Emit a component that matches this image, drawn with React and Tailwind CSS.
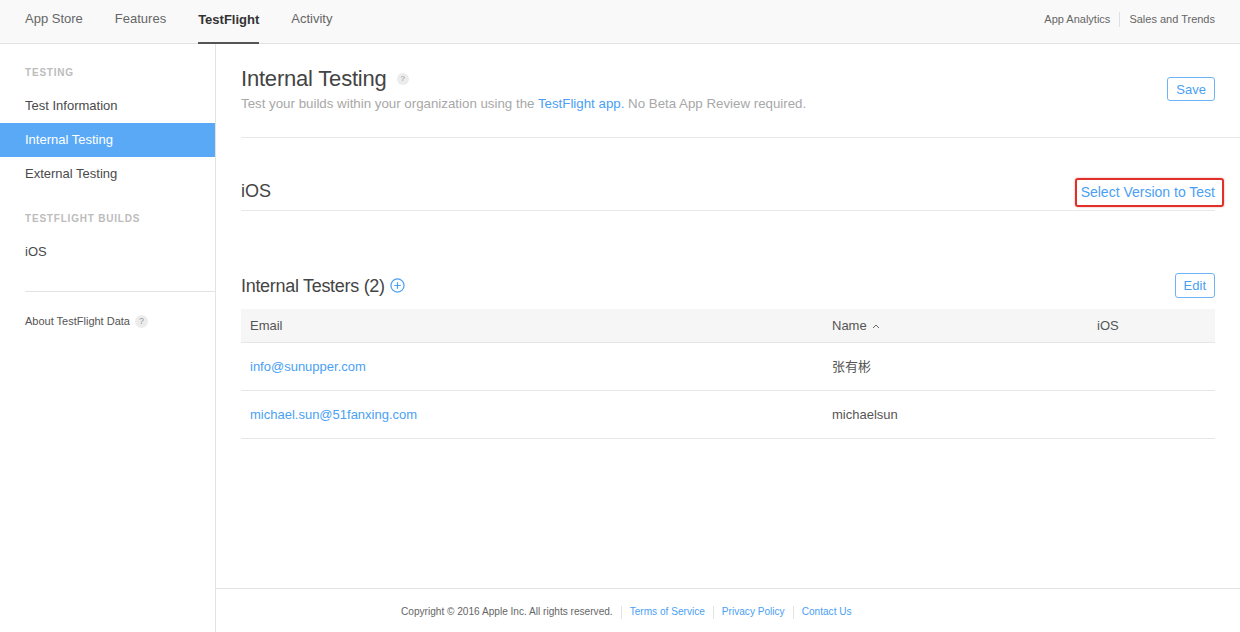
import React from 'react';

const font = { fontFamily: '"Helvetica Neue", "Liberation Sans", "Noto Sans CJK SC", Arial, sans-serif' };

function Help({ size = 'w-3 h-3 text-[8px]' }) {
  return (
    <span className={`inline-flex items-center justify-center rounded-full bg-[#ececec] text-[#999] leading-none ${size}`}>?</span>
  );
}

function SideLabel({ children, className = '' }) {
  return (
    <div className={`px-[25px] h-3 text-[10px] leading-3 font-bold tracking-[0.08em] text-[#bcbcbc] ${className}`}>{children}</div>
  );
}

function SideItem({ children, active }) {
  return (
    <div className={`h-[34px] flex items-center px-[25px] text-[13px] ${active ? 'bg-[#5aa9f7] text-white' : 'text-[#4a4a4a]'}`}>
      {children}
    </div>
  );
}

const testers = [
  { email: 'info@sunupper.com', name: '张有彬' },
  { email: 'michael.sun@51fanxing.com', name: 'michaelsun' },
];

export default function App() {
  return (
    <div className="w-[1240px] h-[632px] bg-white overflow-hidden" style={font}>
      {/* top bar */}
      <div className="h-[44px] bg-[#f9f9f9] border-b border-[#e3e3e3] flex items-stretch justify-between px-[25px]">
        <div className="flex items-stretch gap-[32px] text-[13px] text-[#666]">
          <div className="flex items-center pb-[5px]">App Store</div>
          <div className="flex items-center pb-[5px]">Features</div>
          <div className="flex items-center pb-[3px] font-bold text-[#333] border-b-2 border-[#555] -mb-px">TestFlight</div>
          <div className="flex items-center pb-[5px]">Activity</div>
        </div>
        <div className="flex items-center pb-[5px] text-[11px] text-[#666]">
          <span>App Analytics</span>
          <span className="mx-[9px] w-px h-[15px] bg-[#e0e0e0]" />
          <span>Sales and Trends</span>
        </div>
      </div>

      <div className="flex h-[588px]">
        {/* sidebar */}
        <div className="w-[216px] shrink-0 border-r border-[#e3e3e3] pt-[23px]">
          <SideLabel className="mb-[10px]">TESTING</SideLabel>
          <SideItem>Test Information</SideItem>
          <SideItem active>Internal Testing</SideItem>
          <SideItem>External Testing</SideItem>
          <SideLabel className="mt-[22px] mb-[10px]">TESTFLIGHT BUILDS</SideLabel>
          <SideItem>iOS</SideItem>
          <div className="ml-[25px] mt-[22px] border-t border-[#e3e3e3]" />
          <div className="px-[25px] mt-[21px] h-4 flex items-center gap-[5px] text-[11px] text-[#555]">
            About TestFlight Data <Help size="w-[13px] h-[13px] text-[9px]" />
          </div>
        </div>

        {/* main */}
        <div className="flex-1 flex flex-col">
          <div className="flex-1 pl-[25px]">
            <div className="flex justify-between pr-[25px] pt-[21px] pb-[24px] border-b border-[#e8e8e8]">
              <div>
                <div className="flex items-center gap-[10px] text-[22px] leading-[28px] font-light text-[#444]">
                  <span className="tracking-[-0.2px]">Internal Testing</span> <Help size="w-[12px] h-[12px] text-[8px]" />
                </div>
                <div className="mt-[2px] text-[13.3px] leading-[18px] text-[#a8a8a8]">
                  Test your builds within your organization using the <span className="text-[#4a9ff3]">TestFlight app.</span> No Beta App Review required.
                </div>
              </div>
              <button className="mt-[12px] h-[24px] px-[8px] rounded-[3px] border border-[#6cb3f7] text-[#4a9ff3] text-[13px] leading-none">Save</button>
            </div>

            <div className="mr-[25px]">
              <div className="mt-[41px] pb-[7px] border-b border-[#e8e8e8] flex items-center justify-between">
                <div className="text-[18px] leading-[24px] font-light text-[#444]">iOS</div>
                <div className="relative text-[14px] text-[#4a9ff3] pt-[3px]">
                  Select Version to Test
                  <span className="absolute -left-[6px] -right-[9px] -top-[1px] -bottom-[4px] border-2 border-[#e0302a] rounded-[3px] shadow-[0_0_2px_rgba(224,48,42,0.5)]" />
                </div>
              </div>

              <div className="mt-[62px] flex items-center justify-between">
                <div className="flex items-center gap-[5px] text-[18px] leading-[24px] font-light text-[#444]">
                  <span className="tracking-[-0.3px]">Internal Testers (2)</span>
                  <svg width="15" height="15" viewBox="0 0 16 16" fill="none" stroke="#4a9ff3" strokeWidth="1.3">
                    <circle cx="8" cy="8" r="7" />
                    <path d="M8 4.5v7M4.5 8h7" />
                  </svg>
                </div>
                <button className="h-[25px] px-[8px] rounded-[3px] border border-[#6cb3f7] text-[#4a9ff3] text-[13px] leading-none">Edit</button>
              </div>

              <div className="mt-[11px] text-[13px]">
                <div className="h-[34px] bg-[#f6f6f6] border-b border-[#e6e6e6] grid grid-cols-[591px_265px_1fr] items-center text-[#555]">
                  <div className="pl-[9px]">Email</div>
                  <div className="flex items-center gap-[5px]">Name
                    <svg width="8" height="6" viewBox="0 0 8 6" fill="none" stroke="#666" strokeWidth="1"><path d="M1 5l3-3 3 3" /></svg>
                  </div>
                  <div>iOS</div>
                </div>
                {testers.map(t => (
                  <div key={t.email} className="h-[48px] border-b border-[#e6e6e6] grid grid-cols-[591px_265px_1fr] items-center">
                    <div className="pl-[9px] text-[#4a9ff3]">{t.email}</div>
                    <div className="text-[#555]">{t.name}</div>
                    <div />
                  </div>
                ))}
              </div>
            </div>
          </div>

          {/* footer */}
          <div className="h-[44px] border-t border-[#e3e3e3] flex items-center pt-[3px] pl-[185px] text-[10.1px]">
            <span className="text-[#666]">Copyright © 2016 Apple Inc. All rights reserved.</span>
            <span className="mx-[8px] w-px h-[13px] bg-[#e3e3e3]" />
            <span className="text-[#4a9ff3]">Terms of Service</span>
            <span className="mx-[8px] w-px h-[13px] bg-[#e3e3e3]" />
            <span className="text-[#4a9ff3]">Privacy Policy</span>
            <span className="mx-[8px] w-px h-[13px] bg-[#e3e3e3]" />
            <span className="text-[#4a9ff3]">Contact Us</span>
          </div>
        </div>
      </div>
    </div>
  );
}
